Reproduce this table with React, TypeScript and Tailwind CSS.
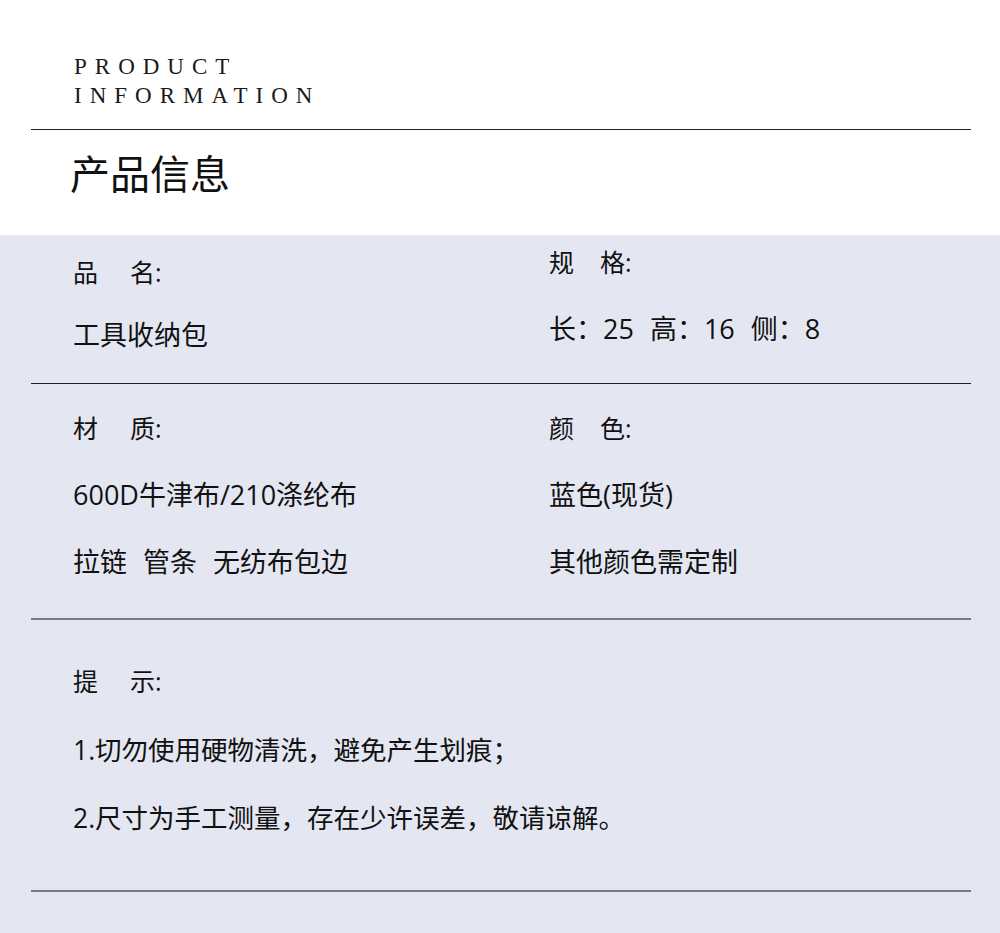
import React from "react";

const cjk = { fontFamily: '"Open Sans", "Noto Sans CJK SC", "Noto Sans", sans-serif' };

export default function App() {
  return (
    <div className="w-[1000px] min-h-[933px] bg-[#e4e7f1] text-[#111]" style={cjk}>
      {/* top white area */}
      <div className="h-[235px] bg-white">
        <div className="ml-[31px] w-[940px]">
          <div
            className="pl-[43px] pt-[52px] text-[23px] leading-[29px] tracking-[8px] text-[#1a1a1a]"
            style={{ fontFamily: '"Liberation Serif", "Times New Roman", serif' }}
          >
            <div>PRODUCT</div>
            <div>INFORMATION</div>
          </div>
          <div className="mt-[19px] h-px bg-[#222]" />
          <div className="mt-[20px] pl-[39px] text-[40px] leading-[48px]">产品信息</div>
        </div>
      </div>

      {/* gray info area */}
      <div className="ml-[31px] w-[940px]">
        {/* row 1 */}
        <div className="flex h-[149px] border-b border-[#222]">
          <div className="w-[518px] pl-[42px] pt-[21px]">
            <div className="flex text-[25px] leading-[32px]">
              <span>品</span>
              <span className="ml-[32px]">名:</span>
            </div>
            <div className="mt-[30px] text-[27px] leading-[34px]">工具收纳包</div>
          </div>
          <div className="flex-1 pt-[11px]">
            <div className="flex text-[25px] leading-[32px]">
              <span>规</span>
              <span className="ml-[26px]">格:</span>
            </div>
            <div className="mt-[34px] flex gap-[16px] text-[27px] leading-[34px]">
              <span>长：25</span>
              <span>高：16</span>
              <span>侧：8</span>
            </div>
          </div>
        </div>

        {/* row 2 */}
        <div className="flex h-[236px] border-b-2 border-[#7a7a7a]">
          <div className="w-[518px] pl-[42px] pt-[28px]">
            <div className="flex text-[25px] leading-[32px]">
              <span>材</span>
              <span className="ml-[32px]">质:</span>
            </div>
            <div className="mt-[34px] text-[27px] leading-[34px]">600D牛津布/210涤纶布</div>
            <div className="mt-[33px] flex gap-[16px] text-[27px] leading-[34px]">
              <span>拉链</span>
              <span>管条</span>
              <span>无纺布包边</span>
            </div>
          </div>
          <div className="flex-1 pt-[28px]">
            <div className="flex text-[25px] leading-[32px]">
              <span>颜</span>
              <span className="ml-[26px]">色:</span>
            </div>
            <div className="mt-[34px] text-[27px] leading-[34px]">蓝色(现货)</div>
            <div className="mt-[33px] text-[27px] leading-[34px]">其他颜色需定制</div>
          </div>
        </div>

        {/* row 3 */}
        <div className="h-[272px] border-b-2 border-[#7a7a7a] pl-[42px] pt-[45px]">
          <div className="flex text-[25px] leading-[32px]">
            <span>提</span>
            <span className="ml-[32px]">示:</span>
          </div>
          <div className="mt-[36px] text-[26.5px] leading-[34px]">1.切勿使用硬物清洗，避免产生划痕；</div>
          <div className="mt-[34px] text-[26.5px] leading-[34px]">2.尺寸为手工测量，存在少许误差，敬请谅解。</div>
        </div>
      </div>
    </div>
  );
}
